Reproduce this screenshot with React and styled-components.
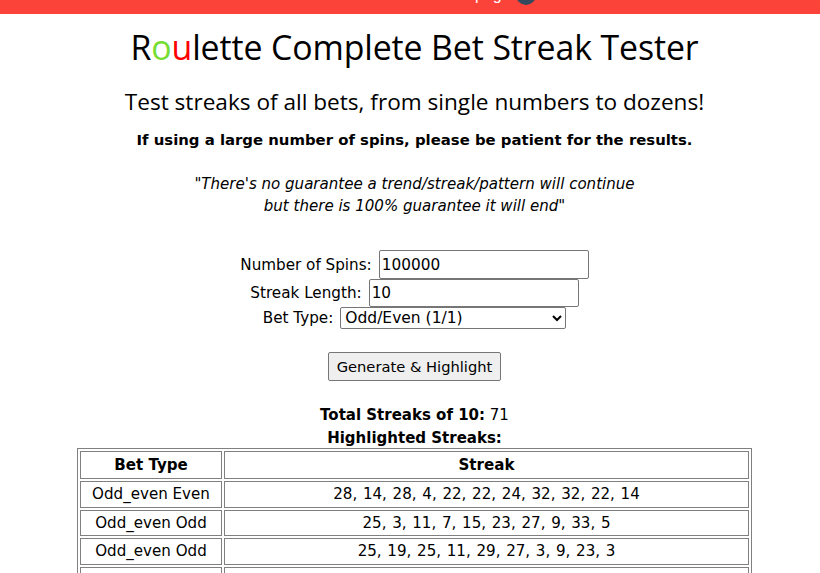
import React from "react";
import styled, { createGlobalStyle } from "styled-components";

const Global = createGlobalStyle`
  html, body { margin: 0; padding: 0; background: #fff; overflow: hidden; height: 573px; }
  body { font-family: "DejaVu Sans", Verdana, sans-serif; font-size: 15px; color: #000; }
`;
const TopBar = styled.div`
  height: 14px; background: #fb4339; position: relative; overflow: hidden;
`;
const BarText = styled.span`
  position: absolute; left: 475px; top: -13px; color: #fff; font: 16px/16px "Liberation Sans", sans-serif;
`;
const BarBadge = styled.span`
  position: absolute; left: 516px; top: -15px; width: 20px; height: 20px; border-radius: 50%;
  background: #34495e; color: #fff; font: bold 11px/20px "Liberation Sans", sans-serif; text-align: center;
  padding-left: 5px; box-sizing: border-box;
`;
const Page = styled.main`
  width: 829px; display: flex; flex-direction: column; align-items: center; text-align: center;
`;
const Title = styled.h1`
  margin: 10px 0 0; font: 400 33.85px/46px "Open Sans", "Noto Sans", sans-serif; letter-spacing: -0.1px;
  white-space: nowrap;
`;
const Letter = styled.span`color: ${p => p.$c};`;
const Subtitle = styled.h2`
  margin: 17px 0 0; font: 400 22.6px/30px "Open Sans", "Noto Sans", sans-serif; white-space: nowrap;
`;
const Notice = styled.p`
  margin: 13px 0 0; font-weight: 700; font-size: 14.88px; line-height: 20px; white-space: nowrap;
`;
const Quote = styled.p`
  margin: 23px 0 0; font-style: italic; font-size: 15.05px; line-height: 22px; white-space: nowrap;
`;
const Form = styled.form`
  margin-top: 33px; display: flex; flex-direction: column; align-items: center;
`;
const Row = styled.label`
  display: flex; align-items: center; gap: 7px; height: ${p => p.$h}px; font-size: 15.2px;
`;
const Input = styled.input`
  box-sizing: border-box; width: 210px; height: ${p => p.$h}px; font: 15.3px "DejaVu Sans", sans-serif; padding: 1px 2px;
  border: 1px solid #767676; border-radius: 2px; background: #fff; color: #000;
`;
const Select = styled.select`
  box-sizing: border-box; width: 226px; height: 22px; font: 15.5px "DejaVu Sans", sans-serif;
  border: 1px solid #767676; border-radius: 2px; background: #fff; color: #000;
`;
const Button = styled.button`
  box-sizing: border-box; margin-top: 23px; width: 173px; height: 29px; font: 14.7px "DejaVu Sans", sans-serif;
  border: 1px solid #767676; border-radius: 2px; background: #efefef; color: #000; padding: 0;
`;
const Summary = styled.div`
  margin-top: 23px; margin-bottom: -2px; line-height: 23px; font-size: 15px;
`;
const Table = styled.table`
  width: 675px; flex: none; border: 1px solid #808080; border-spacing: 2px; border-collapse: separate; table-layout: fixed;
  & th, & td { border: 1px solid #808080; padding: 0; text-align: center; height: 24.5px; font-size: 15.1px; font-weight: 400; }
  & td + td { word-spacing: 0.9px; }
  & th { font-weight: 700; height: 26px; }
`;

const rows = [
  ["Odd_even Even", "28, 14, 28, 4, 22, 22, 24, 32, 32, 22, 14"],
  ["Odd_even Odd", "25, 3, 11, 7, 15, 23, 27, 9, 33, 5"],
  ["Odd_even Odd", "25, 19, 25, 11, 29, 27, 3, 9, 23, 3"],
  ["Odd_even Odd", "17, 5, 9, 31, 13, 21, 35, 1, 7, 19"],
];

export default function App() {
  return (
    <>
      <Global />
      <TopBar>
        <BarText>page</BarText>
        <BarBadge>?</BarBadge>
      </TopBar>
      <Page>
        <Title>R<Letter $c="#77dd33">o</Letter><Letter $c="#ff0000">u</Letter>lette Complete Bet Streak Tester</Title>
        <Subtitle>Test streaks of all bets, from single numbers to dozens!</Subtitle>
        <Notice>If using a large number of spins, please be patient for the results.</Notice>
        <Quote>"There's no guarantee a trend/streak/pattern will continue<br />but there is 100% guarantee it will end"</Quote>
        <Form onSubmit={e => e.preventDefault()}>
          <Row $h={29}>Number of Spins: <Input $h={29} defaultValue="100000" /></Row>
          <Row $h={28}>Streak Length: <Input $h={28} defaultValue="10" /></Row>
          <Row $h={22}>Bet Type:
            <Select defaultValue="oe"><option value="oe">Odd/Even (1/1)</option></Select>
          </Row>
          <Button type="button">Generate &amp; Highlight</Button>
        </Form>
        <Summary><b>Total Streaks of 10:</b> 71<br /><b>Highlighted Streaks:</b></Summary>
        <Table>
          <colgroup><col style={{ width: 142 }} /><col /></colgroup>
          <thead><tr><th>Bet Type</th><th>Streak</th></tr></thead>
          <tbody>
            {rows.map((r, i) => <tr key={i}><td>{r[0]}</td><td>{r[1]}</td></tr>)}
          </tbody>
        </Table>
      </Page>
    </>
  );
}
